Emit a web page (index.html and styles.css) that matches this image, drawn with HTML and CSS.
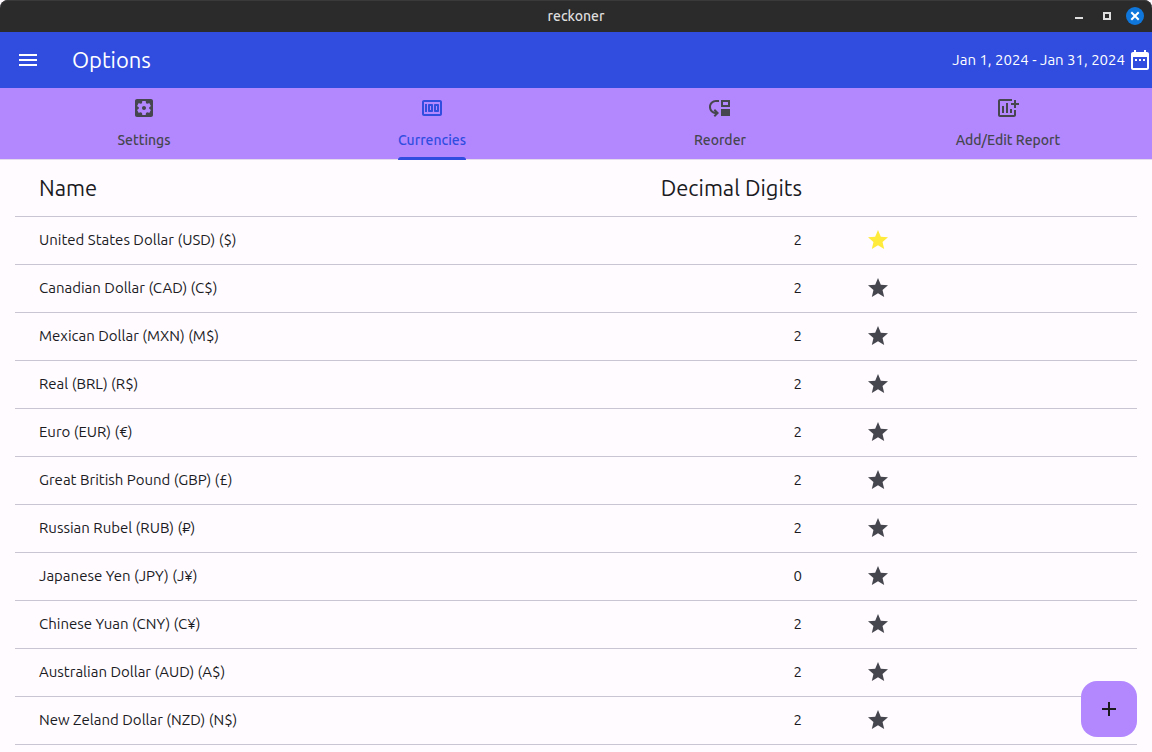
FILE: index.html
```
<!DOCTYPE html>
<html lang="en">
<head>
<meta charset="utf-8">
<title>reckoner</title>
<link rel="stylesheet" href="styles.css">
</head>
<body>
<div class="window">
  <header class="titlebar">
    <span class="window-title">reckoner</span>
    <div class="window-controls">
      <button class="window-button" aria-label="Minimize"><svg width="18" height="18" viewBox="0 0 18 18"><path d="M5 10h8v2H5z"/></svg></button>
      <button class="window-button" aria-label="Maximize"><svg width="18" height="18" viewBox="0 0 18 18"><path fill-rule="evenodd" d="M5 5h8v8H5zM7 7v4h4V7z"/></svg></button>
      <button class="window-button close" aria-label="Close"><svg width="18" height="18" viewBox="0 0 18 18"><path d="M6 6l6 6M12 6l-6 6" stroke="currentColor" stroke-width="2" stroke-linecap="square"/></svg></button>
    </div>
  </header>
  <div class="appbar">
    <button class="icon-button" aria-label="Menu"><svg class="icon" viewBox="0 0 24 24"><path d="M3 18h18v-2H3v2zm0-5h18v-2H3v2zm0-7v2h18V6H3z"/></svg></button>
    <h1 class="page-title">Options</h1>
    <button class="date-range"><span>Jan 1, 2024 - Jan 31, 2024</span><svg class="icon" viewBox="0 0 24 24"><path d="M9 11H7v2h2v-2zm4 0h-2v2h2v-2zm4 0h-2v2h2v-2zm2-7h-1V2h-2v2H8V2H6v2H5c-1.11 0-1.99.9-1.99 2L3 20c0 1.1.89 2 2 2h14c1.1 0 2-.9 2-2V6c0-1.1-.9-2-2-2zm0 16H5V9h14v11z"/></svg></button>
  </div>
  <nav class="tabs" role="tablist">
    <button class="tab" role="tab"><svg class="icon" viewBox="0 0 24 24"><path d="M12 10c-1.1 0-2 .9-2 2s.9 2 2 2 2-.9 2-2-.9-2-2-2zm7-7H5c-1.11 0-2 .9-2 2v14c0 1.1.89 2 2 2h14c1.11 0 2-.9 2-2V5c0-1.1-.89-2-2-2zm-1.75 9c0 .23-.02.46-.05.68l1.48 1.16c.13.11.17.3.08.45l-1.4 2.42c-.09.15-.27.21-.43.15l-1.74-.7c-.36.28-.76.51-1.18.69l-.26 1.85c-.03.17-.18.3-.35.3h-2.8c-.17 0-.32-.13-.35-.29l-.26-1.85c-.43-.18-.82-.41-1.18-.69l-1.74.7c-.16.06-.34 0-.43-.15l-1.4-2.42c-.09-.15-.05-.34.08-.45l1.48-1.16c-.03-.23-.05-.46-.05-.69 0-.23.02-.46.05-.68l-1.48-1.16c-.13-.11-.17-.3-.08-.45l1.4-2.42c.09-.15.27-.21.43-.15l1.74.7c.36-.28.76-.51 1.18-.69l.26-1.85c.03-.17.18-.3.35-.3h2.8c.17 0 .32.13.35.29l.26 1.85c.43.18.82.41 1.18.69l1.74-.7c.16-.06.34 0 .43.15l1.4 2.42c.09.15.05.34-.08.45l-1.48 1.16c.03.23.05.46.05.69z"/></svg><span class="tab-label">Settings</span></button>
    <button class="tab selected" role="tab" aria-selected="true"><svg class="icon" viewBox="0 0 24 24"><path d="M5 8h2v8H5zm7 0H9c-.55 0-1 .45-1 1v6c0 .55.45 1 1 1h3c.55 0 1-.45 1-1V9c0-.55-.45-1-1-1zm-1 6h-1v-4h1v4zm7-6h-3c-.55 0-1 .45-1 1v6c0 .55.45 1 1 1h3c.55 0 1-.45 1-1V9c0-.55-.45-1-1-1zm-1 6h-1v-4h1v4z"/><path d="M4 4c-1.1 0-2 .9-2 2v12c0 1.1.9 2 2 2h16c1.1 0 2-.9 2-2V6c0-1.1-.9-2-2-2H4zm0 14V6h16v12H4z"/></svg><span class="tab-label">Currencies</span></button>
    <button class="tab" role="tab"><svg class="icon" viewBox="0 0 24 24"><path d="M3 11c0 2.45 1.76 4.47 4.08 4.91l-1.49-1.49L7 13l4 4.01L7 21l-1.41-1.41 1.58-1.58v-.06C3.7 17.54 1 14.58 1 11c0-3.87 3.13-7 7-7h3v2H8c-2.76 0-5 2.24-5 5zM22 11V4h-9v7h9zm-2-2h-5V6h5v3zM13 13h9v7h-9z"/></svg><span class="tab-label">Reorder</span></button>
    <button class="tab" role="tab"><svg class="icon" viewBox="0 0 24 24"><path d="M6 10h2v7H6zM10 7h2v10h-2zM14 13h2v4h-2zM18 4h2v3h3v2h-3v3h-2V9h-3V7h3zM18 19H4V5h12V3H4c-1.100 0-2 .9-2 2v14c0 1.100.9 2 2 2h14c1.100 0 2-.9 2-2v-5h-2z"/></svg><span class="tab-label">Add/Edit Report</span></button>
  </nav>
  <main class="content">
    <table class="currencies">
      <thead><tr><th class="name">Name</th><th class="digits">Decimal Digits</th><th class="favorite"></th></tr></thead>
      <tbody id="rows"></tbody>
    </table>
    <button class="fab" aria-label="Add currency"><svg class="icon" viewBox="0 0 24 24"><path d="M19 13h-6v6h-2v-6H5v-2h6V5h2v6h6v2z"/></svg></button>
  </main>
</div>
<script src="app.js"></script>
</body>
</html>
```
FILE: styles.css
```
* { box-sizing: border-box; }
body {
  margin: 0;
  background: #fffbff;
  color: #1b1b1f;
  font-family: Ubuntu, "Noto Sans", sans-serif;
  font-size: 14px;
  line-height: 20px;
}
button {
  border: 0;
  padding: 0;
  background: none;
  color: inherit;
  font: inherit;
  cursor: pointer;
}
svg { display: block; fill: currentColor; }
.icon { width: 24px; height: 24px; flex: none; }
.window {
  display: flex;
  flex-direction: column;
  height: 100vh;
  overflow: hidden;
}
.titlebar {
  display: grid;
  grid-template-columns: 1fr auto 1fr;
  align-items: center;
  flex: none;
  height: 32px;
  padding: 0 8px;
  background: #2b2b2b;
  border-radius: 8px 8px 0 0;
  box-shadow: inset 0 1px #3a3a3a;
  color: #dedede;
}
.window-title { grid-column: 2; font-weight: 500; }
.window-controls { display: flex; justify-content: flex-end; gap: 10px; }
.window-button { width: 18px; height: 18px; border-radius: 50%; }
.window-button.close { background: #0f77dc; color: #fff; }
.appbar {
  display: flex;
  align-items: center;
  flex: none;
  height: 56px;
  padding-left: 16px;
  background: #304ddf;
  color: #fff;
}
.page-title {
  flex: 1;
  margin: 0;
  padding-left: 32px;
  font-size: 22px;
  font-weight: 400;
  line-height: 28px;
}
.date-range {
  display: flex;
  align-items: center;
  gap: 3px;
  font-size: 15px;
  font-weight: 400;
}
.tabs {
  display: flex;
  flex: none;
  height: 72px;
  background: #b388ff;
  border-bottom: 1px solid #e4dcec;
}
.tab {
  display: flex;
  flex: 1;
  flex-direction: column;
  align-items: center;
  justify-content: space-between;
  padding-top: 8px;
  color: #46464f;
  font-weight: 500;
}
.tab-label { height: 29px; }
.tab.selected { color: #304ddf; }
.tab.selected .tab-label { position: relative; }
.tab.selected .tab-label::after {
  content: "";
  position: absolute;
  left: 0;
  right: 0;
  bottom: -1px;
  height: 3px;
  border-radius: 3px 3px 0 0;
  background: #304ddf;
}
.content { flex: 1; min-height: 0; padding: 0 15px; }
.currencies { width: 100%; border-collapse: separate; border-spacing: 0; table-layout: fixed; }
.currencies th, .currencies td { padding: 0; border-bottom: 1px solid #cac5d3; white-space: nowrap; }
.currencies th {
  height: 57px;
  font-size: 22px;
  font-weight: 400;
  line-height: 28px;
}
.currencies td { height: 48px; padding-bottom: 1px; font-size: 15px; }
.currencies .name { width: 55%; padding-left: 24px; text-align: left; }
.currencies .digits { width: 18%; padding-right: 32px; text-align: right; }
.currencies .favorite { padding-left: 32px; }
.star { display: block; color: #46464f; }
.star.active { color: #ffeb3b; }
.fab {
  position: absolute;
  right: 15px;
  bottom: 15px;
  display: grid;
  place-items: center;
  width: 56px;
  height: 56px;
  border-radius: 16px;
  background: #b388ff;
  color: #1b1b1f;
}
```
FILE: app.js
```
const currencies = [
  ["United States Dollar (USD) ($)", 2, true],
  ["Canadian Dollar (CAD) (C$)", 2],
  ["Mexican Dollar (MXN) (M$)", 2],
  ["Real (BRL) (R$)", 2],
  ["Euro (EUR) (€)", 2],
  ["Great British Pound (GBP) (£)", 2],
  ["Russian Rubel (RUB) (₽)", 2],
  ["Japanese Yen (JPY) (J¥)", 0],
  ["Chinese Yuan (CNY) (C¥)", 2],
  ["Australian Dollar (AUD) (A$)", 2],
  ["New Zeland Dollar (NZD) (N$)", 2]
];
const star = '<svg class="icon" viewBox="0 0 24 24"><path d="M12 17.27L18.18 21l-1.64-7.03L22 9.24l-7.19-.61L12 2 9.19 8.63 2 9.24l5.46 4.73L5.82 21z"/></svg>';
document.getElementById("rows").innerHTML = currencies.map(([name, digits, active]) =>
  `<tr><td class="name">${name}</td><td class="digits">${digits}</td>` +
  `<td class="favorite"><button class="star${active ? " active" : ""}" aria-label="Set ${name} as default">${star}</button></td></tr>`
).join("");
```
